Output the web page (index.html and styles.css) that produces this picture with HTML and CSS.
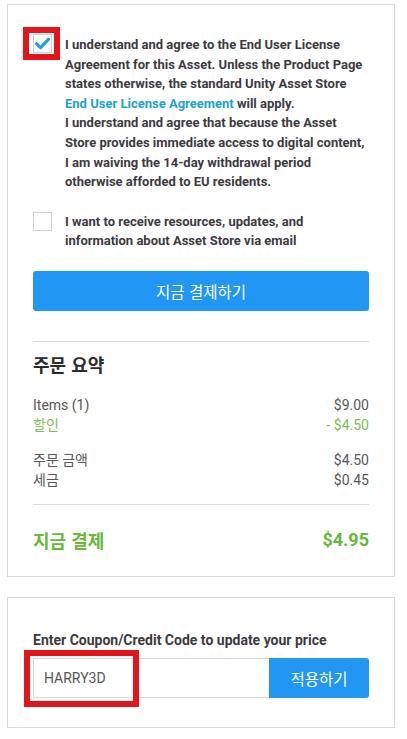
FILE: index.html
```html
<!DOCTYPE html>
<html lang="ko">
<head>
<meta charset="utf-8">
<link rel="stylesheet" href="styles.css">
</head>
<body>
<div class="page">
  <section class="card checkout">
    <div class="check-row">
      <div class="box-wrap">
        <span class="box checked">
          <svg viewBox="0 0 19 19" width="19" height="19"><path d="M3.5 9.8 L7.6 13.6 L15.6 5.2" fill="none" stroke="#1ea6cc" stroke-width="3.2" stroke-linecap="round" stroke-linejoin="round"/></svg>
        </span>
        <span class="highlight hl-check"></span>
      </div>
      <p class="check-text">I understand and agree to the End User License Agreement for this Asset. Unless the Product Page states otherwise, the standard Unity Asset Store <a class="link">End User License Agreement</a> will apply.<br>I understand and agree that because the Asset Store provides immediate access to digital content, I am waiving the 14-day withdrawal period otherwise afforded to EU residents.</p>
    </div>
    <div class="check-row second">
      <div class="box-wrap"><span class="box"></span></div>
      <p class="check-text">I want to receive resources, updates, and information about Asset Store via email</p>
    </div>
    <button class="pay-btn">지금 결제하기</button>
    <hr class="divider first-div">
    <h2 class="summary-title">주문 요약</h2>
    <div class="rows">
      <div class="row"><span>Items (1)</span><span>$9.00</span></div>
      <div class="row discount"><span>할인</span><span>- $4.50</span></div>
    </div>
    <div class="rows second-rows">
      <div class="row"><span>주문 금액</span><span>$4.50</span></div>
      <div class="row"><span>세금</span><span>$0.45</span></div>
    </div>
    <hr class="divider">
    <div class="total"><span class="total-label">지금 결제</span><span class="total-value">$4.95</span></div>
  </section>
  <section class="card coupon">
    <p class="coupon-label">Enter Coupon/Credit Code to update your price</p>
    <div class="coupon-form">
      <div class="input-wrap">
        <input class="coupon-input" type="text" value="HARRY3D">
        <span class="highlight hl-input"></span>
      </div>
      <button class="apply-btn">적용하기</button>
    </div>
  </section>
</div>
</body>
</html>
```

FILE: styles.css
```css
* { box-sizing: border-box; }
html, body { margin: 0; padding: 0; background: #fff; }
body {
  font-family: Roboto, "Noto Sans CJK KR", sans-serif;
  color: #3a3a3a;
  width: 407px;
}
.page {
  padding: 4px 12px 0 7px;
}
.card {
  border: 1px solid #d9d9d9;
  background: #fff;
  padding: 0 25px;
}
.checkout {
  padding-top: 29px;
  padding-bottom: 1px;
}
.check-row {
  display: flex;
  align-items: flex-start;
  gap: 13px;
}
.check-row.second {
  margin-top: 19px;
}
.box-wrap {
  position: relative;
  flex: 0 0 19px;
  width: 19px;
  height: 19px;
}
.check-row.second .box-wrap { margin-top: 1px; }
.box {
  display: block;
  width: 19px;
  height: 19px;
  border: 1px solid #d0d0d0;
  background: #fff;
  position: relative;
}
.box svg {
  position: absolute;
  left: -1px;
  top: -1px;
}
.highlight {
  position: absolute;
  border: 6px solid #e3151b;
  pointer-events: none;
}
.hl-check {
  left: -10px;
  top: -7px;
  width: 37px;
  height: 33px;
}
.check-text {
  margin: 0;
  font-size: 13px;
  font-weight: 700;
  line-height: 19.6px;
  color: #3d3a3f;
  margin-top: 1px;
}
.link {
  color: #1aa4c8;
}
.pay-btn {
  display: block;
  width: 100%;
  height: 40px;
  margin-top: 20px;
  border: 0;
  border-radius: 3px;
  background: #2196f3;
  color: #fff;
  font-family: "Noto Sans CJK KR", sans-serif;
  font-size: 15.5px;
  font-weight: 400;
}
.divider {
  border: 0;
  border-top: 1px solid #dcdcdc;
  margin: 0;
}
.first-div {
  margin-top: 30px;
}
.summary-title {
  margin: 9px 0 0;
  font-family: "Noto Sans CJK KR", sans-serif;
  font-size: 18px;
  font-weight: 700;
  line-height: 26px;
  color: #2b2b2b;
}
.rows {
  margin-top: 18px;
}
.second-rows {
  margin-top: 15px;
  margin-bottom: 14px;
}
.row {
  display: flex;
  justify-content: space-between;
  font-family: Roboto, "Noto Sans CJK KR", sans-serif;
  font-size: 14px;
  line-height: 20px;
  color: #585858;
}
.row.discount { color: #7cbd55; }
.total {
  display: flex;
  justify-content: space-between;
  align-items: center;
  height: 70px;
  color: #66b93a;
  font-weight: 700;
  font-size: 18px;
}
.total-label {
  font-family: "Noto Sans CJK KR", sans-serif;
}
.total-value {
  font-family: Roboto, sans-serif;
}
.coupon {
  margin-top: 20px;
  padding-top: 32px;
  padding-bottom: 29px;
}
.coupon-label {
  margin: 0;
  font-size: 14px;
  font-weight: 700;
  line-height: 20px;
  color: #3d3a3f;
}
.coupon-form {
  display: flex;
  margin-top: 8px;
  height: 40px;
}
.input-wrap {
  position: relative;
  flex: 1;
}
.coupon-input {
  width: 100%;
  height: 40px;
  border: 1px solid #d6d6d6;
  border-right: 0;
  padding: 0 10px;
  font-family: Roboto, sans-serif;
  font-size: 14px;
  color: #555;
  outline: none;
}
.hl-input {
  left: -9px;
  top: -8px;
  width: 115px;
  height: 57px;
}
.apply-btn {
  width: 100px;
  height: 40px;
  border: 0;
  border-radius: 0 3px 3px 0;
  background: #2196f3;
  color: #fff;
  font-family: "Noto Sans CJK KR", sans-serif;
  font-size: 15.5px;
}
```
